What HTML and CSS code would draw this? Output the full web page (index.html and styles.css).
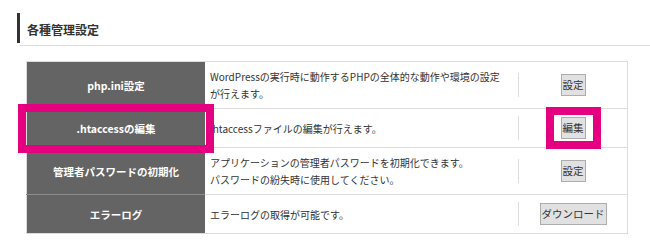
FILE: index.html
```html
<!DOCTYPE html>
<html>
<head>
  <meta charset="utf-8">
  <title>各種管理設定</title>
  <link rel="stylesheet" href="styles.css">
</head>
<body>
  <h2 class="heading"><span class="heading-title">各種管理設定</span></h2>

  <table class="settings">
    <tr>
      <th>php.ini設定</th>
      <td class="desc">WordPressの実行時に動作するPHPの全体的な動作や環境の設定<br>が行えます。</td>
      <td class="action"><div class="action-inner"><button class="btn">設定</button></div></td>
    </tr>
    <tr>
      <th class="marked">.htaccessの編集<span class="mark mark-cell"></span></th>
      <td class="desc">.htaccessファイルの編集が行えます。</td>
      <td class="action"><div class="action-inner"><button class="btn marked">編集<span class="mark mark-btn"></span></button></div></td>
    </tr>
    <tr>
      <th>管理者パスワードの初期化</th>
      <td class="desc">アプリケーションの管理者パスワードを初期化できます。<br>パスワードの紛失時に使用してください。</td>
      <td class="action"><div class="action-inner"><button class="btn">設定</button></div></td>
    </tr>
    <tr>
      <th>エラーログ</th>
      <td class="desc">エラーログの取得が可能です。</td>
      <td class="action"><div class="action-inner"><button class="btn">ダウンロード</button></div></td>
    </tr>
  </table>
</body>
</html>
```

FILE: styles.css
```css
/* Reset default margin and padding */
* {
    margin: 0;
    padding: 0;
}

body {
    font-family: "Noto Sans CJK JP", "Noto Sans", sans-serif;
    background-color: white;
    color: #333;
}

/* Section heading */
.heading {
    margin: 13px 0 0 20px;
    border-bottom: 1px solid #dcdcdc;
    padding-bottom: 2px;
    font-size: 12px;
    font-weight: bold;
    color: #333;
}

.heading-title {
    display: block;
    margin-left: -3px;
    border-left: 3px solid #333;
    padding: 3px 0 0 7px;
    height: 27px;
    line-height: 27px;
}

/* Settings table */
.settings {
    margin: 15px 0 0 26px;
    width: 602px;
    border-collapse: collapse;
    border: 1px solid #dcdcdc;
    font-size: 10px;
}

.settings th {
    width: 178px;
    background-color: #646464;
    color: white;
    font-weight: bold;
    font-size: 10.5px;
    text-align: center;
    border-top: 1px solid #8c8c8c;
}

.settings tr:first-child th {
    border-top: none;
}

.settings td {
    border-top: 1px solid #dcdcdc;
}

.desc {
    padding: 6px 4px 6px 5px;
    line-height: 17px;
    text-align: left;
    vertical-align: middle;
}

.action {
    width: 109px;
    padding: 7px 0;
    vertical-align: middle;
}

.action-inner {
    display: flex;
    align-items: center;
    justify-content: center;
    height: 24px;
    border-left: 1px solid #dcdcdc;
}

.btn {
    font-family: "Noto Sans CJK JP", "Noto Sans", sans-serif;
    font-size: 10.5px;
    line-height: 12px;
    padding: 4px 1px;
    color: #333;
    background-color: #e1e1e1;
    border: 1px solid #adadad;
    border-radius: 0;
}

/* Pink highlight frames */
.marked {
    position: relative;
}

.mark {
    position: absolute;
    border: 8px solid #e4007f;
}

.mark-cell {
    top: -5px;
    bottom: -6px;
    left: -9px;
    right: -9px;
}

.mark-btn {
    top: -11px;
    bottom: -11px;
    left: -16px;
    right: -16px;
}
```
